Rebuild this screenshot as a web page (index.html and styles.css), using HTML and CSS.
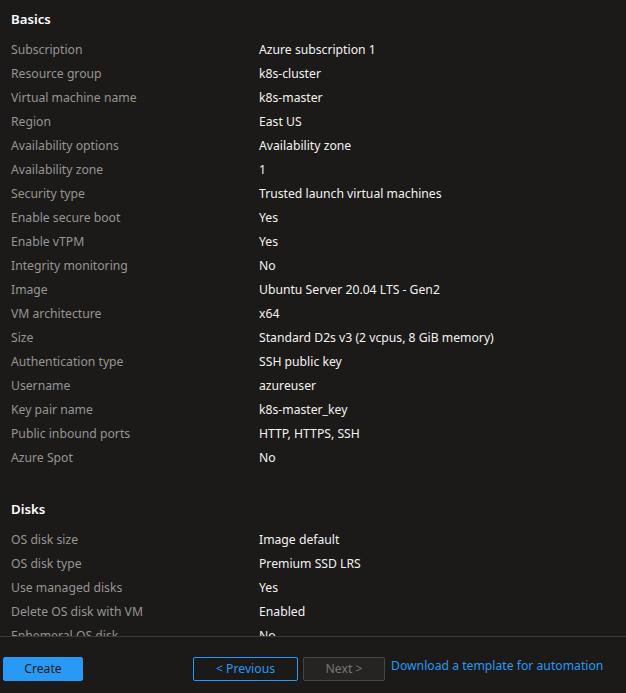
FILE: index.html
```html
<!DOCTYPE html>
<html lang="en">
<head>
<meta charset="utf-8">
<title>Review + create</title>
<link rel="stylesheet" href="styles.css">
</head>
<body>
<div class="page">
  <main class="content">
    <section class="section">
      <h2 class="section-title">Basics</h2>
      <dl class="props">
        <div class="row"><dt>Subscription</dt><dd>Azure subscription 1</dd></div>
        <div class="row"><dt>Resource group</dt><dd>k8s-cluster</dd></div>
        <div class="row"><dt>Virtual machine name</dt><dd>k8s-master</dd></div>
        <div class="row"><dt>Region</dt><dd>East US</dd></div>
        <div class="row"><dt>Availability options</dt><dd>Availability zone</dd></div>
        <div class="row"><dt>Availability zone</dt><dd>1</dd></div>
        <div class="row"><dt>Security type</dt><dd>Trusted launch virtual machines</dd></div>
        <div class="row"><dt>Enable secure boot</dt><dd>Yes</dd></div>
        <div class="row"><dt>Enable vTPM</dt><dd>Yes</dd></div>
        <div class="row"><dt>Integrity monitoring</dt><dd>No</dd></div>
        <div class="row"><dt>Image</dt><dd>Ubuntu Server 20.04 LTS - Gen2</dd></div>
        <div class="row"><dt>VM architecture</dt><dd>x64</dd></div>
        <div class="row"><dt>Size</dt><dd>Standard D2s v3 (2 vcpus, 8 GiB memory)</dd></div>
        <div class="row"><dt>Authentication type</dt><dd>SSH public key</dd></div>
        <div class="row"><dt>Username</dt><dd>azureuser</dd></div>
        <div class="row"><dt>Key pair name</dt><dd>k8s-master_key</dd></div>
        <div class="row"><dt>Public inbound ports</dt><dd>HTTP, HTTPS, SSH</dd></div>
        <div class="row"><dt>Azure Spot</dt><dd>No</dd></div>
      </dl>
    </section>
    <section class="section section-next">
      <h2 class="section-title">Disks</h2>
      <dl class="props">
        <div class="row"><dt>OS disk size</dt><dd>Image default</dd></div>
        <div class="row"><dt>OS disk type</dt><dd>Premium SSD LRS</dd></div>
        <div class="row"><dt>Use managed disks</dt><dd>Yes</dd></div>
        <div class="row"><dt>Delete OS disk with VM</dt><dd>Enabled</dd></div>
        <div class="row"><dt>Ephemeral OS disk</dt><dd>No</dd></div>
      </dl>
    </section>
  </main>
  <footer class="footer">
    <button class="btn btn-primary" type="button">Create</button>
    <button class="btn btn-outline" type="button">&lt; Previous</button>
    <button class="btn btn-disabled" type="button" disabled>Next &gt;</button>
    <a class="link" href="#">Download a template for automation</a>
  </footer>
</div>
</body>
</html>
```
FILE: styles.css
```css
* { box-sizing: border-box; }
html, body {
  margin: 0;
  padding: 0;
  background: #1b1a19;
}
body {
  font-family: "Segoe UI", "Noto Sans", "Open Sans", sans-serif;
  font-size: 12.2px;
  color: #f3f2f1;
}
.page {
  height: 693px;
  display: flex;
  flex-direction: column;
}
.content {
  flex: 1;
  overflow: hidden;
  padding: 7px 11px 0;
}
.section-title {
  margin: 0 0 6px;
  font-size: 13.2px;
  font-weight: 600;
  line-height: 24px;
  color: #ffffff;
}
.section-next { margin-top: 28px; }
.props { margin: 0; }
.row {
  display: flex;
  height: 24px;
  align-items: center;
}
.row dt {
  width: 248px;
  color: #979593;
  white-space: nowrap;
}
.row dd {
  margin: 0;
  color: #f3f2f1;
  white-space: nowrap;
}
.footer {
  flex: none;
  height: 57px;
  border-top: 1px solid #3b3a39;
  display: flex;
  align-items: flex-start;
  padding: 20px 3px 0;
}
.btn {
  font-family: inherit;
  font-size: 12.2px;
  height: 24px;
  border-radius: 2px;
  padding: 0;
  line-height: 20px;
}
.btn-primary {
  width: 80px;
  background: #2899f5;
  border: 1px solid #2899f5;
  color: #1b1a19;
}
.btn-outline {
  width: 105px;
  margin-left: 110px;
  background: #1b1a19;
  border: 1px solid #2899f5;
  color: #2899f5;
}
.btn-disabled {
  width: 82px;
  margin-left: 5px;
  background: #252423;
  border: 1px solid #484644;
  color: #797775;
}
.link {
  margin-left: 6px;
  color: #2899f5;
  text-decoration: none;
  line-height: 18px;
  white-space: nowrap;
}
```
